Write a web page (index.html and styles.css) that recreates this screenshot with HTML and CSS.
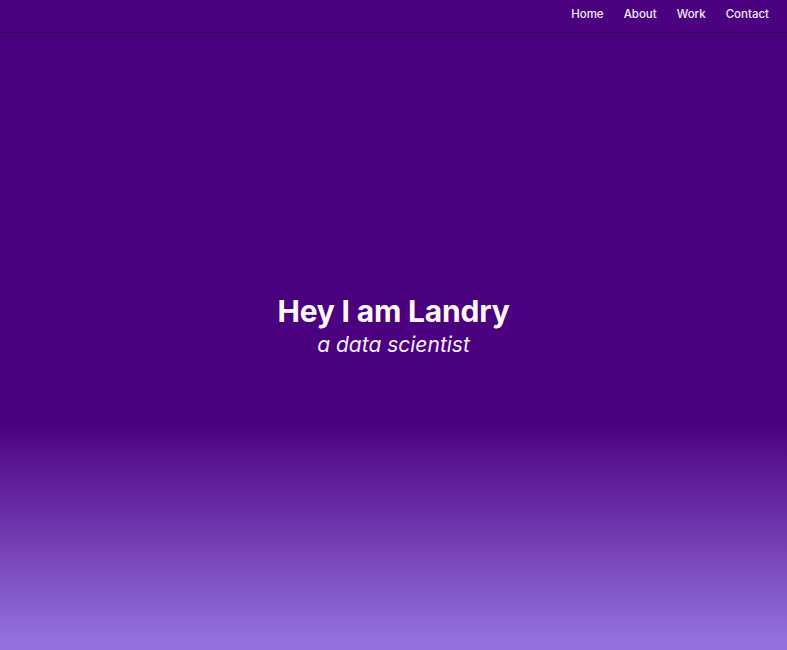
FILE: index.html
```html
<!DOCTYPE html>
<html lang="en">
<head>
<meta charset="utf-8">
<title>Landry</title>
<link rel="stylesheet" href="styles.css">
</head>
<body>
<header class="topbar">
  <nav class="nav">
    <a href="#" class="nav-link">Home</a>
    <a href="#" class="nav-link">About</a>
    <a href="#" class="nav-link">Work</a>
    <a href="#" class="nav-link">Contact</a>
  </nav>
</header>
<main class="hero">
  <h1 class="hero-title">Hey I am Landry</h1>
  <p class="hero-sub">a data scientist</p>
</main>
</body>
</html>
```
FILE: styles.css
```css
html, body {
  margin: 0;
  padding: 0;
  height: 100%;
}
body {
  background: linear-gradient(to bottom, #4b0080 0%, #4b0080 65%, #9370db 98%, #9370db 100%);
  font-family: "Inter", "Open Sans", sans-serif;
  color: #fff;
  display: flex;
  flex-direction: column;
  min-height: 650px;
}
.topbar {
  height: 33px;
  box-sizing: border-box;
  border-bottom: 1px solid #33005a;
  display: flex;
  justify-content: flex-end;
  align-items: flex-start;
  padding: 7px 18px 0 0;
}
.nav {
  display: flex;
  gap: 20px;
}
.nav-link {
  color: #f3ecf6;
  text-decoration: none;
  font-size: 11.5px;
  font-weight: 500;
}
.hero {
  flex: 1;
  display: flex;
  flex-direction: column;
  align-items: center;
  justify-content: center;
  padding-bottom: 34px;
}
.hero-title {
  margin: 0;
  font-size: 30px;
  font-weight: 700;
  letter-spacing: -0.2px;
  color: #fdf8f5;
}
.hero-sub {
  margin: 3px 0 0;
  font-size: 21px;
  font-style: italic;
  font-weight: 400;
  color: #f3eef7;
}
```
